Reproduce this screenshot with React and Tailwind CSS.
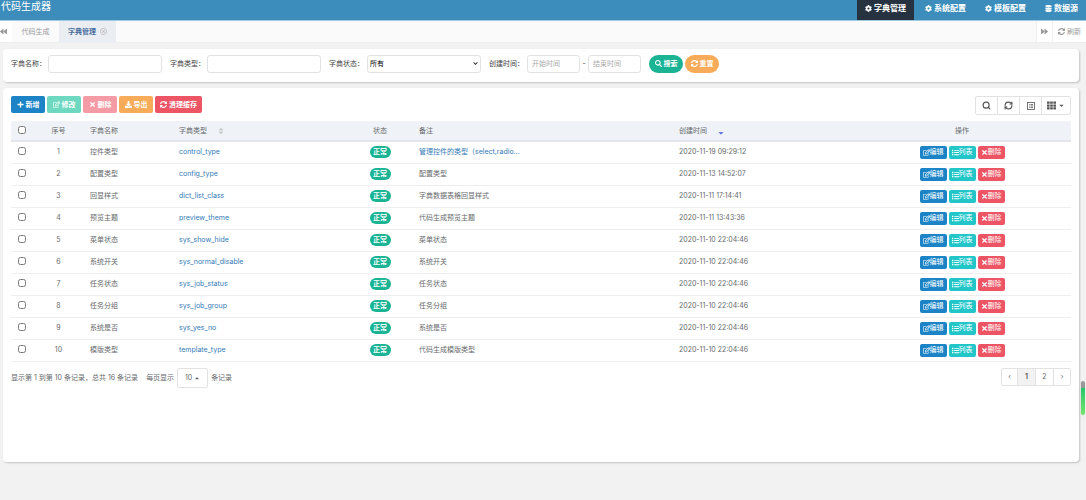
import {
  FaBackward,
  FaCaretDown,
  FaCaretUp,
  FaChevronDown,
  FaCog,
  FaDatabase,
  FaDownload,
  FaForward,
  FaList,
  FaPlus,
  FaRegEdit,
  FaRegTimesCircle,
  FaSearch,
  FaSort,
  FaTh,
  FaTimes,
} from "react-icons/fa";
import { RefreshCw, Search } from "lucide-react";

function RefreshIcon({ className }) {
  return (
    <svg viewBox="0 0 1536 1536" fill="currentColor" className={className} aria-hidden="true">
      <path d="M1511 928q0 5-1 7-64 268-268 434.500T764 1536q-146 0-282.500-55T238 1324l-129 129q-19 19-45 19t-45-19-19-45V960q0-26 19-45t45-19h448q26 0 45 19t19 45-19 45l-137 137q71 66 161 102t187 36q134 0 250-65t186-179q11-17 53-117 8-23 30-23h192q13 0 22.500 9.500t9.500 22.500zm25-800v448q0 26-19 45t-45 19h-448q-26 0-45-19t-19-45 19-45l138-138Q969 256 768 256q-134 0-250 65T332 500q-11 17-53 117-8 23-30 23H50q-13 0-22.500-9.500T18 608v-7q65-268 270-434.500T768 0q146 0 284 55.500T1297 212l130-129q19-19 45-19t45 19 19 45z" />
    </svg>
  );
}

function ListAltIcon({ className }) {
  return (
    <svg viewBox="0 0 16 16" fill="none" stroke="currentColor" strokeWidth="1.6" className={className} aria-hidden="true">
      <rect x="1" y="1" width="14" height="14" />
      <path d="M4 5h1.500M4 8h1.500M4 11h1.500M7 5h5M7 8h5M7 11h5" />
    </svg>
  );
}

const navItems = [
  { label: "字典管理", icon: FaCog, active: true },
  { label: "系统配置", icon: FaCog },
  { label: "模板配置", icon: FaCog },
  { label: "数据源", icon: FaDatabase },
];

const toolbar = [
  { label: "新增", icon: FaPlus, color: "bg-[#1c84c6]" },
  { label: "修改", icon: FaRegEdit, color: "bg-[#6fd8c0]" },
  { label: "删除", icon: FaTimes, color: "bg-[#f49ba5]" },
  { label: "导出", icon: FaDownload, color: "bg-[#f8ac59]" },
  { label: "清理缓存", icon: RefreshIcon, color: "bg-[#ed5565]" },
];

const rowActions = [
  { label: "编辑", icon: FaRegEdit, color: "bg-[#1c84c6]" },
  { label: "列表", icon: FaList, color: "bg-[#23c6c8]" },
  { label: "删除", icon: FaTimes, color: "bg-[#ed5565]" },
];

const rows = [
  { name: "控件类型", type: "control_type", note: "管理控件的类型（select,radio...", time: "2020-11-19 09:29:12", link: true },
  { name: "配置类型", type: "config_type", note: "配置类型", time: "2020-11-13 14:52:07" },
  { name: "回显样式", type: "dict_list_class", note: "字典数据表格回显样式", time: "2020-11-11 17:14:41" },
  { name: "预览主题", type: "preview_theme", note: "代码生成预览主题", time: "2020-11-11 13:43:36" },
  { name: "菜单状态", type: "sys_show_hide", note: "菜单状态", time: "2020-11-10 22:04:46" },
  { name: "系统开关", type: "sys_normal_disable", note: "系统开关", time: "2020-11-10 22:04:46" },
  { name: "任务状态", type: "sys_job_status", note: "任务状态", time: "2020-11-10 22:04:46" },
  { name: "任务分组", type: "sys_job_group", note: "任务分组", time: "2020-11-10 22:04:46" },
  { name: "系统是否", type: "sys_yes_no", note: "系统是否", time: "2020-11-10 22:04:46" },
  { name: "模版类型", type: "template_type", note: "代码生成模版类型", time: "2020-11-10 22:04:46" },
];

function Header() {
  return (
    <header className="flex justify-between h-[21px] bg-[#3c8dbc] border-b border-[#a3c9df] text-white">
      <h1 className="pl-px text-[10px] leading-3">代码生成器</h1>
      <nav className="flex gap-[3px]">
        {navItems.map(({ label, icon: Icon, active }) => (
          <a
            key={label}
            href="#"
            className={"flex items-center gap-[2px] px-2 pb-1 text-[8px] font-bold " + (active ? "bg-[#263240]" : "")}
          >
            <Icon className="size-[7px]" /> {label}
          </a>
        ))}
      </nav>
    </header>
  );
}

function TabBar() {
  return (
    <div className="flex h-[22px] bg-[#fafafa] border-b border-[#eeeeee] text-[#999999]">
      <button aria-label="向左" className="w-3 bg-white flex items-center">
        <FaBackward className="size-[7px]" />
      </button>
      <a href="#" className="w-[47px] flex items-center justify-center">代码生成</a>
      <a href="#" className="w-[57px] flex items-center justify-center gap-1 bg-[#eaedf1] font-bold text-[#4a6f9f]">
        字典管理 <FaRegTimesCircle className="size-[7px] text-[#bbbbbb]" />
      </a>
      <button aria-label="向右" className="ml-auto w-4 bg-white border-l border-[#eeeeee] flex items-center justify-center">
        <FaForward className="size-[7px]" />
      </button>
      <button className="w-[34px] bg-white border-l border-[#eeeeee] flex items-center justify-center gap-[2px]">
        <RefreshIcon className="size-[7px]" /> 刷新
      </button>
    </div>
  );
}

function SearchForm() {
  const field = "h-[18px] border border-[#e2e2e2] rounded-[3px] bg-white";
  return (
    <form className="flex items-center gap-2 h-[33px] px-2 pb-[4px] bg-white rounded shadow-[1px_1px_2px_rgba(0,0,0,0.2)] text-[#444444]">
      <label className="flex items-center">
        <span className="w-[37px]">字典名称：</span>
        <input type="text" className={field + " w-[114px] px-1"} />
      </label>
      <label className="flex items-center">
        <span className="w-[37px]">字典类型：</span>
        <input type="text" className={field + " w-[114px] px-1"} />
      </label>
      <label className="relative flex items-center">
        <span className="w-[38px]">字典状态：</span>
        <select className={field + " w-[114px] appearance-none pl-[2px] text-black"}>
          <option>所有</option>
          <option>正常</option>
          <option>停用</option>
        </select>
        <FaChevronDown className="absolute right-[3px] size-[5px] text-black pointer-events-none" />
      </label>
      <div className="flex items-center">
        <label htmlFor="start" className="w-[38px]">创建时间：</label>
        <input id="start" type="text" placeholder="开始时间" className={field + " w-[53px] px-1 placeholder:text-[#aaaaaa]"} />
        <span className="w-2 text-center">-</span>
        <input aria-label="结束时间" type="text" placeholder="结束时间" className={field + " w-[53px] px-1 placeholder:text-[#aaaaaa]"} />
      </div>
      <div className="flex gap-[2px] text-white font-bold">
        <button type="button" className="flex items-center justify-center gap-[2px] w-[34px] h-[18px] rounded-full bg-[#1ab394]">
          <FaSearch className="size-[7px]" /> 搜索
        </button>
        <button type="button" className="flex items-center justify-center gap-[2px] w-[34px] h-[18px] rounded-full bg-[#f8ac59]">
          <RefreshIcon className="size-[7px]" /> 重置
        </button>
      </div>
    </form>
  );
}

function Toolbar() {
  const tool = "h-full flex items-center justify-center gap-[2px]";
  return (
    <div className="flex justify-between h-[25px]">
      <div className="flex gap-[2px] h-[17px] text-white">
        {toolbar.map(({ label, icon: Icon, color }) => (
          <button key={label} className={"flex items-center gap-[2px] px-[5px] min-w-[34px] justify-center rounded-[2px] font-bold " + color}>
            <Icon className="size-[7px]" /> {label}
          </button>
        ))}
      </div>
      <div className="flex h-[19px] border border-[#e2e2e2] rounded-[2px] divide-x divide-[#e2e2e2] text-[#555555]">
        <button aria-label="搜索" className={tool + " w-[22px]"}><Search strokeWidth={3} className="size-[9px]" /></button>
        <button aria-label="刷新" className={tool + " w-[22px]"}><RefreshCw strokeWidth={3} className="size-[9px]" /></button>
        <button aria-label="切换视图" className={tool + " w-[22px]"}><ListAltIcon className="size-2" /></button>
        <button aria-label="列" className={tool + " w-7"}><FaTh className="size-[9px]" /><FaCaretDown className="size-[7px]" /></button>
      </div>
    </div>
  );
}

function DictTable() {
  return (
    <table className="w-full table-fixed text-left">
      <colgroup>
        <col className="w-[22px]" />
        <col className="w-[51px]" />
        <col className="w-[89px]" />
        <col className="w-[174px]" />
        <col className="w-[66px]" />
        <col className="w-[260px]" />
        <col className="w-[180px]" />
        <col className="w-[218px]" />
      </colgroup>
      <thead>
        <tr className="h-5 bg-[#eff3f8] border-b-2 border-[#e2e6ea]">
          <th className="pb-[2px]"><input type="checkbox" aria-label="全选" className="block size-2 mx-auto" /></th>
          <th className="font-normal text-center">序号</th>
          <th className="font-normal px-[6px]">字典名称</th>
          <th className="font-normal px-[6px]">
            <span className="flex items-center gap-[10px]">字典类型 <FaSort className="size-2 text-[#cccccc]" /></span>
          </th>
          <th className="font-normal text-center">状态</th>
          <th className="font-normal px-[6px]">备注</th>
          <th className="font-normal px-[6px]">
            <span className="flex items-center gap-[10px]">创建时间 <FaCaretDown className="size-2 mt-1 text-[#6a78e0]" /></span>
          </th>
          <th className="font-normal text-center">操作</th>
        </tr>
      </thead>
      <tbody>
        {rows.map((r, i) => (
          <tr key={r.type} className="h-[22px] border-b border-[#eeeeee]">
            <td className="pb-[3px]"><input type="checkbox" aria-label={r.name} className="block size-2 mx-auto" /></td>
            <td className="text-center">{i + 1}</td>
            <td className="px-[6px]">{r.name}</td>
            <td className="px-[6px]"><a href="#" className="text-[#337ab7]">{r.type}</a></td>
            <td>
              <span className="block w-[21px] mx-auto rounded-full bg-[#1ab394] text-center font-bold leading-3 text-white">正常</span>
            </td>
            <td className="px-[6px] whitespace-nowrap">
              {r.link ? <a href="#" className="text-[#337ab7]">{r.note}</a> : r.note}
            </td>
            <td className="px-[6px] whitespace-nowrap">{r.time}</td>
            <td>
              <div className="flex justify-center gap-[2px] text-white">
                {rowActions.map(({ label, icon: Icon, color }) => (
                  <button key={label} className={"flex items-center justify-center w-[27px] h-[13px] rounded-[2px] " + color}>
                    <Icon className="size-[7px]" />{label}
                  </button>
                ))}
              </div>
            </td>
          </tr>
        ))}
      </tbody>
    </table>
  );
}

function Pagination() {
  const page = "h-full w-[18px]";
  return (
    <div className="flex justify-between pt-[6px]">
      <div className="flex items-center gap-[3px]">
        <span className="mr-[5px]">显示第 1 到第 10 条记录，总共 16 条记录</span>
        <span>每页显示</span>
        <button className="flex items-center justify-center gap-[2px] w-[31px] h-5 border border-[#e2e2e2] rounded-[2px]">
          10 <FaCaretUp className="size-[6px]" />
        </button>
        <span>条记录</span>
      </div>
      <div className="flex h-[18px] border border-[#e2e2e2] rounded-[2px] divide-x divide-[#e2e2e2]">
        <button aria-label="上一页" className="h-full w-4">‹</button>
        <button className={page + " bg-[#f2f2f2] font-bold"}>1</button>
        <button className={page}>2</button>
        <button aria-label="下一页" className="h-full w-4">›</button>
      </div>
    </div>
  );
}

export default function App() {
  return (
    <div className="relative min-h-screen bg-[#f2f2f2] font-['Inter','Noto_Sans_CJK_SC',sans-serif] text-[7px] leading-[10px] text-[#676a6c]">
      <Header />
      <TabBar />
      <main className="flex flex-col gap-[6px] pt-[6px] pl-[3px] pr-[7px]">
        <SearchForm />
        <section className="min-h-[374px] px-2 pt-2 bg-white rounded shadow-[1px_1px_2px_rgba(0,0,0,0.2)]">
          <Toolbar />
          <DictTable />
          <Pagination />
        </section>
      </main>
      {/* floating scroll marker */}
      <div className="absolute right-px top-[381px] w-1 h-[34px] rounded-sm bg-linear-to-b from-[#999999] from-20% via-[#1fc76a] via-20% to-[#6ee66a] shadow-md"></div>
    </div>
  );
}
